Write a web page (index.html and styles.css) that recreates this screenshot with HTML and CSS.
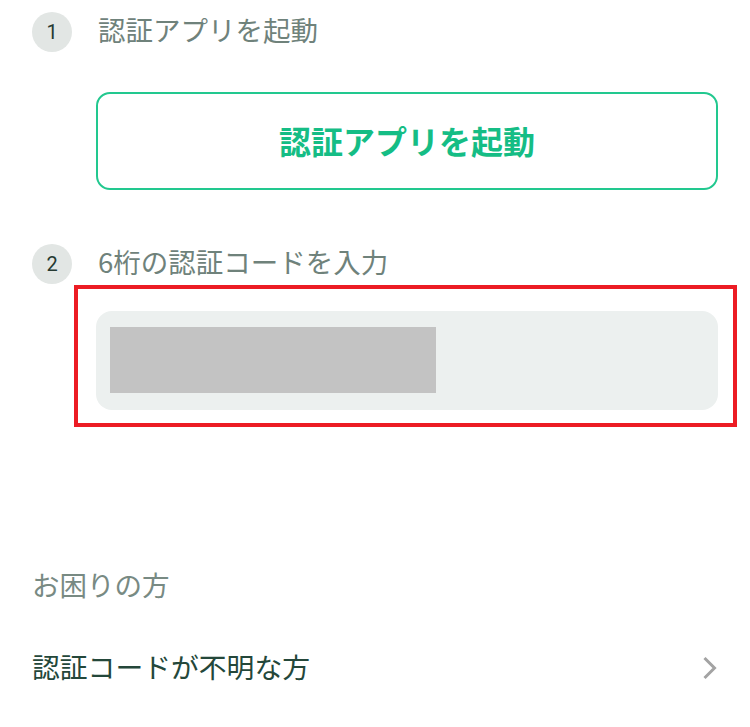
FILE: index.html
```html
<!DOCTYPE html>
<html lang="ja">
<head>
<meta charset="utf-8">
<link rel="stylesheet" href="styles.css">
</head>
<body>
<div class="page">
  <div class="step-head step1">
    <span class="num">1</span>
    <span class="step-title">認証アプリを起動</span>
  </div>
  <button class="launch">認証アプリを起動</button>

  <div class="step-head step2">
    <span class="num">2</span>
    <span class="step-title">6桁の認証コードを入力</span>
  </div>
  <div class="highlight">
    <div class="code-field">
      <div class="code-mask"></div>
    </div>
  </div>

  <div class="help-title">お困りの方</div>
  <div class="help-item">
    <span>認証コードが不明な方</span>
    <svg class="chev" width="16" height="26" viewBox="0 0 16 26"><path d="M2.5 3 L12.5 13 L2.5 23" fill="none" stroke="#a3a3a3" stroke-width="3"/></svg>
  </div>
</div>
</body>
</html>
```

FILE: styles.css
```css
html, body {
  margin: 0;
  padding: 0;
  background: #ffffff;
}
body {
  font-family: "Noto Sans CJK JP", "Noto Sans", sans-serif;
}
.page {
  padding: 0 32px;
}
.step-head {
  display: flex;
  align-items: center;
  height: 40px;
  gap: 26px;
}
.step1 {
  padding-top: 12px;
}
.step2 {
  margin-top: 54px;
}
.num {
  width: 40px;
  height: 40px;
  border-radius: 50%;
  background: #e2e6e4;
  color: #263a32;
  font-family: Roboto, "Noto Sans", sans-serif;
  font-size: 20px;
  display: flex;
  align-items: center;
  justify-content: center;
  flex: none;
}
.step-title {
  font-size: 27.5px;
  color: #6f827b;
  line-height: 40px;
  margin-bottom: 7px;
}
.launch {
  display: flex;
  align-items: center;
  justify-content: center;
  box-sizing: border-box;
  margin: 40px 0 0 64px;
  width: calc(100% - 64px);
  height: 98px;
  border: 2px solid #22c88f;
  border-radius: 14px;
  background: #fff;
  color: #15bd85;
  font-family: "Noto Sans CJK JP", sans-serif;
  font-weight: 700;
  font-size: 32px;
  padding: 0 0 3px;
}
.highlight {
  box-sizing: border-box;
  margin: 1px -19px 0 42px;
  height: 142px;
  border: 4px solid #ec1c24;
  padding: 22px 15px 13px 18px;
}
.code-field {
  height: 99px;
  background: #ecf0ef;
  border-radius: 16px;
  padding: 16px 14px;
  box-sizing: border-box;
}
.code-mask {
  width: 326px;
  height: 66px;
  background: #c3c3c3;
}
.help-title {
  margin-top: 139px;
  font-size: 27.5px;
  line-height: 36px;
  color: #788a83;
}
.help-item {
  margin-top: 35px;
  height: 60px;
  display: flex;
  align-items: center;
  justify-content: space-between;
  font-size: 27.8px;
  color: #24473a;
}
.help-item span {
  margin-top: -3px;
}
.chev {
  margin-right: 0;
  margin-top: 2px;
}
```
